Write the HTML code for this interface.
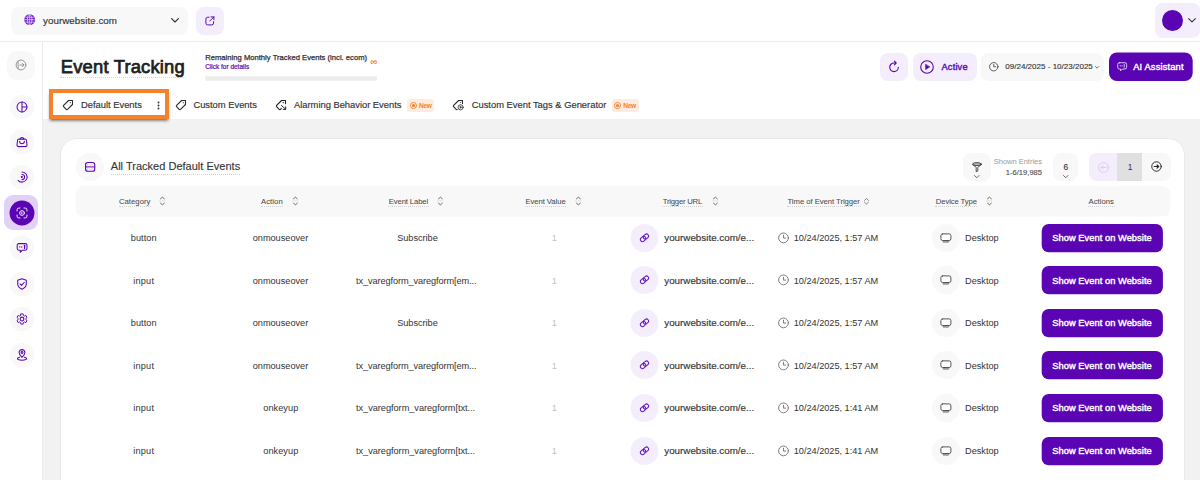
<!DOCTYPE html>
<html lang="en">
<head>
<meta charset="utf-8">
<title>Event Tracking</title>
<style>
*{box-sizing:border-box;margin:0;padding:0}
html,body{width:1200px;height:480px;overflow:hidden;background:#fff}
body{font-family:"Liberation Sans",sans-serif;color:#333;position:relative}
.a{position:absolute}
.t{position:absolute;white-space:nowrap}
svg{position:absolute;overflow:visible;fill:none;stroke-linecap:round;stroke-linejoin:round}
.dot{position:absolute;height:0;border-top:1px dotted #d2d2d2}
</style>
</head>
<body>

<div class="a" style="left:0;top:41px;width:1200px;height:1px;background:#ececec"></div>
<div class="a" style="left:11px;top:6.5px;width:177px;height:28.5px;background:#f8f8f8;border-radius:8px"></div>
<svg style="left:23.800px;top:14.300px" width="11.400" height="11.400" viewBox="0 0 12 12"><circle cx="6" cy="6" r="5.700" fill="#661cc0"/><g stroke="#eadcfa" stroke-width="0.750"><ellipse cx="6" cy="6" rx="2.4" ry="5.3"/><path d="M0.6 6h10.8M6 0.6v10.8M1.3 3.4h9.4M1.3 8.6h9.4"/></g></svg>
<div class="t" style="left:43.00px;top:16.00px;font-size:9.8px;line-height:9.8px;color:#333;letter-spacing:0.034px;-webkit-text-stroke:0.15px #333;">yourwebsite.com</div>
<svg style="left:171px;top:17.700px" width="8" height="5" viewBox="0 0 8 5"><path d="M0.6 0.6L4 4l3.4-3.400" stroke="#333" stroke-width="1.150"/></svg>
<div class="a" style="left:195.5px;top:6.5px;width:28px;height:28.5px;background:#f4edfc;border-radius:8px"></div>
<svg style="left:204.700px;top:15.700px" width="9.800" height="9.800" viewBox="0 0 11 11"><path d="M4.6 1.4H3a2 2 0 0 0-2 2V8a2 2 0 0 0 2 2h4.6a2 2 0 0 0 2-2V6.4M6.8 1h3.2v3.2M10 1L5.4 5.6" stroke="#5a06ad" stroke-width="1.1"/></svg>
<div class="a" style="left:1154.7px;top:2.9px;width:45.8px;height:35.1px;background:#f4edfc;border-radius:8px"></div>
<div class="a" style="left:1161.7px;top:9.9px;width:21.4px;height:21.4px;background:#5b04b4;border-radius:50%"></div>
<svg style="left:1188px;top:18.200px" width="8" height="4.500" viewBox="0 0 8 4.500"><path d="M0.6 0.6L4 3.900l3.400-3.300" stroke="#333" stroke-width="1.050"/></svg>
<div class="a" style="left:42px;top:42px;width:1px;height:438px;background:#ececec"></div>
<div class="a" style="left:7.3px;top:51px;width:28px;height:28.5px;background:#f8f8f8;border-radius:10px"></div>
<svg style="left:15.200px;top:58.800px" width="12" height="12" viewBox="0 0 12 12" stroke="#8c8c8c" stroke-width="0.900"><circle cx="6" cy="6" r="4.900"/><path d="M3.100 2.100v7.800M5 6h3.800M7.400 4.400L9 6 7.400 7.600"/></svg>
<svg style="left:8.50px;top:93.50px" width="26" height="26" viewBox="0 0 26 26"><circle cx="13" cy="13" r="12.350" fill="#f8f8f8"/></svg>
<svg style="left:8.50px;top:128.95px" width="26" height="26" viewBox="0 0 26 26"><circle cx="13" cy="13" r="12.350" fill="#f8f8f8"/></svg>
<svg style="left:8.50px;top:164.40px" width="26" height="26" viewBox="0 0 26 26"><circle cx="13" cy="13" r="12.350" fill="#f8f8f8"/></svg>
<div class="a" style="left:4px;top:195.2px;width:34px;height:34.8px;background:#e2d1f6;border-radius:9px"></div>
<svg style="left:8.50px;top:199.85px" width="26" height="26" viewBox="0 0 26 26"><circle cx="13" cy="13" r="12.450" fill="#5b04b4"/></svg>
<svg style="left:8.50px;top:235.30px" width="26" height="26" viewBox="0 0 26 26"><circle cx="13" cy="13" r="12.350" fill="#f8f8f8"/></svg>
<svg style="left:8.50px;top:270.75px" width="26" height="26" viewBox="0 0 26 26"><circle cx="13" cy="13" r="12.350" fill="#f8f8f8"/></svg>
<svg style="left:8.50px;top:306.20px" width="26" height="26" viewBox="0 0 26 26"><circle cx="13" cy="13" r="12.350" fill="#f8f8f8"/></svg>
<svg style="left:8.50px;top:341.65px" width="26" height="26" viewBox="0 0 26 26"><circle cx="13" cy="13" r="12.350" fill="#f8f8f8"/></svg>
<svg style="left:14.5px;top:99.50px" width="14" height="14" viewBox="0 0 14 14" stroke="#5a06ad" stroke-width="1.05"><circle cx="7" cy="7" r="4.950"/><path d="M7 2v10M7 7h5"/></svg>
<svg style="left:14.5px;top:134.95px" width="14" height="14" viewBox="0 0 14 14" stroke="#5a06ad" stroke-width="1.05"><path d="M3.900 4.100h6.200a1.300 1.300 0 0 1 1.300 1.100l.6 4.600a1.600 1.600 0 0 1-1.600 1.800H3.600a1.600 1.600 0 0 1-1.600-1.800l.6-4.600a1.300 1.300 0 0 1 1.300-1.100z"/><path d="M5.300 4.100a1.700 1.700 0 0 1 3.400 0M4.600 6.300a2.400 2.400 0 0 0 4.800 0"/></svg>
<svg style="left:14.5px;top:170.40px" width="14" height="14" viewBox="0 0 14 14" stroke="#5a06ad" stroke-width="1.05"><path d="M7 1.900A5.100 5.100 0 1 1 3.100 10.300M7 4.400A2.600 2.600 0 0 1 7 9.600"/><circle cx="6.800" cy="7" r="0.550" fill="#5a06ad"/></svg>
<svg style="left:14.5px;top:205.85px" width="14" height="14" viewBox="0 0 14 14" stroke="#efe4fb" stroke-width="1"><path d="M2.050 5V3.800a1.750 1.750 0 0 1 1.750-1.750H5M9 2.050h1.200a1.750 1.750 0 0 1 1.750 1.750V5M11.950 9v1.200a1.750 1.750 0 0 1-1.750 1.750H9M5 11.950H3.800a1.750 1.750 0 0 1-1.750-1.750V9"/><circle cx="7" cy="7" r="2.400"/><path d="M7.300 6.100a0.950 0.950 0 1 0 0 1.800" stroke-width="0.800"/></svg>
<svg style="left:14.5px;top:241.30px" width="14" height="14" viewBox="0 0 14 14" stroke="#5a06ad" stroke-width="1.05"><path d="M3.800 2.600h6.600a1.600 1.600 0 0 1 1.600 1.600v3.400a1.600 1.600 0 0 1-1.600 1.600H7.200L5.300 11.300V9.200H3.800a1.600 1.600 0 0 1-1.600-1.600V4.200a1.600 1.600 0 0 1 1.600-1.600z"/><path d="M4.700 5.900h0.100M6.700 5.900h0.100" stroke-width="1.300"/><path d="M9.600 4.300v3.200" stroke-width="1.300"/></svg>
<svg style="left:14.5px;top:276.75px" width="14" height="14" viewBox="0 0 14 14" stroke="#5a06ad" stroke-width="1.05"><path d="M7 1.700l4.300 1.500v3.500c0 2.600-1.800 4.400-4.300 5.500C4.500 11.100 2.700 9.300 2.700 6.700V3.200z"/><path d="M5 6.900l1.500 1.500 2.700-2.900"/></svg>
<svg style="left:14.5px;top:312.20px" width="14" height="14" viewBox="0 0 14 14" stroke="#5a06ad" stroke-width="1.05"><circle cx="7" cy="7" r="1.900"/><path d="M5.900 1.900h2.200l.3 1.500 1.100.6 1.400-.5 1.100 1.900-1.100 1v1.200l1.100 1-1.100 1.900-1.400-.5-1.100.6-.3 1.500H5.900l-.3-1.500-1.100-.6-1.400.5L2 8.600l1.100-1V6.400L2 5.400l1.100-1.900 1.400.5 1.100-.6z" stroke-width="0.95"/></svg>
<svg style="left:14.5px;top:347.65px" width="14" height="14" viewBox="0 0 14 14" stroke="#5a06ad" stroke-width="1.05"><path d="M7 9.300c1.900-1.900 2.900-3.400 2.900-4.800a2.900 2.900 0 0 0-5.800 0c0 1.400 1 2.900 2.900 4.800z"/><circle cx="7" cy="4.500" r="0.950"/><path d="M4.600 9.200c-1.300.3-2.200.8-2.200 1.400 0 .9 2 1.600 4.600 1.600s4.600-.7 4.600-1.600c0-.6-.9-1.100-2.200-1.400"/></svg>
<div class="t" style="left:60.80px;top:58.00px;font-size:18.4px;line-height:18.4px;color:#1f1f1f;letter-spacing:0.177px;-webkit-text-stroke:0.75px #1f1f1f;">Event Tracking</div>
<div class="dot" style="left:60px;top:76.5px;width:126px;border-color:#d6d6d6"></div>
<div class="t" style="left:205.25px;top:54.00px;font-size:7.6px;line-height:7.6px;color:#2e2e2e;letter-spacing:0.023px;-webkit-text-stroke:0.25px #2e2e2e;">Remaining Monthly Tracked Events (incl. ecom)</div>
<div class="t" style="left:205.25px;top:64.00px;font-size:6.48px;line-height:6.48px;color:#5a06ad;letter-spacing:0.001px;-webkit-text-stroke:0.2px #5a06ad;">Click for details</div>
<div class="t" style="left:370.36px;top:57.00px;font-size:9.5px;line-height:9.5px;color:#f5822a;letter-spacing:0.000px;font-weight:700;">∞</div>
<svg style="left:205px;top:76px" width="172" height="5" viewBox="0 0 172 5"><rect x="0.250" y="0.250" width="171.700" height="4.450" rx="1" fill="#ececec"/></svg>
<div class="a" style="left:880.2px;top:53px;width:28.3px;height:28px;background:#f4edfc;border-radius:8px"></div>
<svg style="left:888.2px;top:60.2px" width="12" height="13" viewBox="0 0 12 13"><path d="M10.3 7.300a4.300 4.300 0 1 1-4.300-4.300h1.800M6.400 1.200l1.800 1.800-1.800 1.800" stroke="#5a06ad" stroke-width="1.100"/></svg>
<div class="a" style="left:913.2px;top:53px;width:63.5px;height:28px;background:#f4edfc;border-radius:8px"></div>
<svg style="left:920.2px;top:59.700px" width="14" height="14" viewBox="0 0 14 14"><circle cx="7" cy="7" r="6.300" stroke="#5a06ad" stroke-width="1.100"/><path d="M5.600 4.500v5l4-2.500z" fill="#5a06ad" stroke="#5a06ad" stroke-width="0.600"/></svg>
<div class="t" style="left:941.50px;top:63.00px;font-size:9.3px;line-height:9.3px;color:#5c0ab6;letter-spacing:0.155px;-webkit-text-stroke:0.4px #5c0ab6;">Active</div>
<div class="a" style="left:981.4px;top:53px;width:122.9px;height:28px;background:#f8f8f8;border-radius:8px"></div>
<svg style="left:989.300px;top:62.100px" width="9.500" height="9.500" viewBox="0 0 10 10"><circle cx="5" cy="5" r="4.400" stroke="#444" stroke-width="0.900"/><path d="M5 2.500V5h2" stroke="#444" stroke-width="0.900"/></svg>
<div class="t" style="left:1005.30px;top:63.00px;font-size:8px;line-height:8px;color:#333;letter-spacing:0.014px;-webkit-text-stroke:0.12px #333;">09/24/2025 - 10/23/2025</div>
<svg style="left:1094.900px;top:65.500px" width="4.200" height="2.700" viewBox="0 0 5 3"><path d="M0.400 0.400L2.500 2.500 4.600 0.400" stroke="#444" stroke-width="0.850"/></svg>
<svg style="left:1108px;top:52px" width="86" height="30" viewBox="0 0 86 30"><rect x="1" y="0.400" width="83.700" height="28.600" rx="8" fill="#5b04b4"/></svg>
<svg style="left:1116.800px;top:62px" width="10.350" height="9.900" viewBox="0 0 11.5 11" stroke="#e9dafa" stroke-width="1"><path d="M2.600 0.800h6.300a1.800 1.800 0 0 1 1.800 1.800v3.400a1.800 1.800 0 0 1-1.800 1.800H6L4 9.800v-2H2.600a1.800 1.800 0 0 1-1.800-1.800V2.600a1.800 1.800 0 0 1 1.800-1.800z"/><path d="M3.500 4.300h0.200M5.500 4.300h0.200" stroke-width="1.200"/><path d="M8 2.800v3"/></svg>
<div class="t" style="left:1133.20px;top:63.00px;font-size:9.3px;line-height:9.3px;color:#fff;letter-spacing:0.155px;-webkit-text-stroke:0.4px #fff;">AI Assistant</div>
<div class="a" style="left:43px;top:119.300px;width:1157px;height:361px;background:#f2f2f2"></div>
<div class="a" style="left:49px;top:89px;width:120px;height:30px;background:#fff;border:4px solid #f6832b;box-shadow:0 2.500px 3px -1px rgba(0,0,0,0.6)"></div>
<svg style="left:63.2px;top:100px" width="10" height="10" viewBox="0 0 10 10" stroke="#2a2a2a" stroke-width="1.100"><path d="M5.600 .500H9.500V4.500L4.500 9.300a.9 .9 0 0 1-1.300 0L.600 6.700a.9 .9 0 0 1 0-1.300Z"/><circle cx="7.300" cy="2.700" r="0.600" fill="#333" stroke="none"/></svg>
<div class="t" style="left:81.00px;top:100.00px;font-size:9.4px;line-height:9.4px;color:#333;letter-spacing:-0.010px;-webkit-text-stroke:0.16px #333;">Default Events</div>
<svg style="left:157px;top:101px" width="3" height="9" viewBox="0 0 3 9"><circle cx="1.500" cy="1.500" r="0.950" fill="#333"/><circle cx="1.500" cy="4.500" r="0.950" fill="#333"/><circle cx="1.500" cy="7.500" r="0.950" fill="#333"/></svg>
<svg style="left:175.8px;top:100px" width="10" height="10" viewBox="0 0 10 10" stroke="#2a2a2a" stroke-width="1.100"><path d="M5.600 .500H9.500V4.500L4.500 9.300a.9 .9 0 0 1-1.300 0L.600 6.700a.9 .9 0 0 1 0-1.300Z"/><circle cx="7.300" cy="2.700" r="0.600" fill="#333" stroke="none"/></svg>
<div class="t" style="left:193.40px;top:100.00px;font-size:9.4px;line-height:9.4px;color:#333;letter-spacing:-0.011px;-webkit-text-stroke:0.16px #333;">Custom Events</div>
<svg style="left:276.100px;top:100px" width="10" height="10" viewBox="0 0 10 10" stroke="#222" stroke-width="1.100"><path d="M9.500 3.800V.500H5.600L.600 5.400a.9 .9 0 0 0 0 1.300L3.200 9.300a.9 .9 0 0 0 1.300 0L5.300 8.500"/><circle cx="7.300" cy="2.700" r="0.650" fill="#222" stroke="none"/><path d="M5.500 5.500L9.300 8.900M9.700 6.800V9.400H7.200" stroke-width="1"/></svg>
<div class="t" style="left:294.00px;top:100.00px;font-size:9.4px;line-height:9.4px;color:#333;letter-spacing:-0.019px;-webkit-text-stroke:0.16px #333;">Alarming Behavior Events</div>
<div class="a" style="left:407.1px;top:99.300px;width:27.3px;height:12.300px;background:#fdebdf;border-radius:3.500px"></div>
<svg style="left:409.7px;top:101.7px" width="7" height="7" viewBox="0 0 7 7"><circle cx="3.500" cy="3.500" r="3.050" stroke="#f6832b" stroke-width="0.900"/><circle cx="3.500" cy="3.500" r="1.600" fill="#f6832b"/></svg>
<div class="t" style="left:419.00px;top:103.00px;font-size:6.6px;line-height:6.6px;color:#f6832b;letter-spacing:-0.385px;font-weight:700;">New</div>
<svg style="left:453.300px;top:100px" width="10.500" height="10.500" viewBox="0 0 10.500 10.500" stroke="#2a2a2a" stroke-width="1.100"><path d="M9.500 3.600V.500H5.600L.600 5.400a.9 .9 0 0 0 0 1.300L3.200 9.300a.9 .9 0 0 0 1 .200"/><circle cx="7.300" cy="2.500" r="0.550" fill="#333" stroke="none"/><circle cx="7.600" cy="7.300" r="2.600" stroke-width="0.800"/><path d="M6.900 6.100v2.400l2-1.200z" fill="#333" stroke-width="0.300"/></svg>
<div class="t" style="left:471.70px;top:100.00px;font-size:9.4px;line-height:9.4px;color:#333;letter-spacing:-0.005px;-webkit-text-stroke:0.16px #333;">Custom Event Tags &amp; Generator</div>
<div class="a" style="left:611.7px;top:99.300px;width:27.3px;height:12.300px;background:#fdebdf;border-radius:3.500px"></div>
<svg style="left:614.2px;top:101.7px" width="7" height="7" viewBox="0 0 7 7"><circle cx="3.500" cy="3.500" r="3.050" stroke="#f6832b" stroke-width="0.900"/><circle cx="3.500" cy="3.500" r="1.600" fill="#f6832b"/></svg>
<div class="t" style="left:623.30px;top:103.00px;font-size:6.6px;line-height:6.6px;color:#f6832b;letter-spacing:-0.385px;font-weight:700;">New</div>
<div class="a" style="left:60.3px;top:138px;width:1125px;height:360px;background:#fff;border:1px solid #e9e9e9;border-radius:17px"></div>
<div class="a" style="left:75.6px;top:153px;width:28px;height:28px;background:#f8f8f8;border-radius:50%"></div>
<svg style="left:84.900px;top:162px" width="10.300" height="9.800" viewBox="0 0 10.300 9.800" stroke="#5a06ad" stroke-width="1.100"><rect x="0.550" y="0.550" width="9.200" height="8.700" rx="2.300" fill="#fbf8ff"/><path d="M0.600 4.900h9.100" stroke-width="1"/><path d="M4.200 2.750h3.400M4.200 7.050h3.400" stroke="#d9c4f4" stroke-width="0.700"/><path d="M2.500 2.750h0.100M2.500 7.050h0.100" stroke="#b08ae4" stroke-width="0.900"/></svg>
<div class="t" style="left:110.80px;top:161.00px;font-size:11px;line-height:11px;color:#333;letter-spacing:0.015px;-webkit-text-stroke:0.12px #333;">All Tracked Default Events</div>
<div class="dot" style="left:111px;top:174.200px;width:129px"></div>
<div class="a" style="left:962.5px;top:153px;width:28.1px;height:28.2px;background:#f8f8f8;border-radius:8px"></div>
<svg style="left:971.500px;top:161.600px" width="10" height="10" viewBox="0 0 10 10" stroke="#333" stroke-width="0.850"><ellipse cx="5" cy="2.100" rx="4.400" ry="1.500" fill="#b8b8b8"/><path d="M0.700 2.600C1.200 4 4.200 4.400 4.200 5.600V9.700L5.800 8.900V5.600C5.800 4.400 8.800 4 9.300 2.600" stroke-width="0.850"/></svg>
<svg style="left:973.800px;top:175px" width="5.500" height="3.500" viewBox="0 0 5.500 3.500"><path d="M0.500 0.500l2.250 2.250L5 0.500" stroke="#444" stroke-width="0.800"/></svg>
<div class="t" style="left:993.75px;top:158.00px;font-size:7.5px;line-height:7.5px;color:#9a9a9a;letter-spacing:-0.009px;">Shown Entries</div>
<div class="t" style="left:1005.80px;top:169.00px;font-size:7.5px;line-height:7.5px;color:#555;letter-spacing:0.038px;-webkit-text-stroke:0.15px #555;">1-6/19,985</div>
<div class="a" style="left:1053px;top:153px;width:24.700px;height:28.2px;background:#f8f8f8;border-radius:8px"></div>
<div class="t" style="left:1063.51px;top:163.00px;font-size:8.4px;line-height:8.4px;color:#333;letter-spacing:0.000px;-webkit-text-stroke:0.1px #333;">6</div>
<svg style="left:1062.800px;top:175px" width="5.500" height="3.500" viewBox="0 0 5.500 3.500"><path d="M0.500 0.500l2.250 2.250L5 0.500" stroke="#444" stroke-width="0.800"/></svg>
<div class="a" style="left:1089px;top:153px;width:82px;height:28.2px;background:#f8f8f8;border-radius:8px;overflow:hidden"><div class="a" style="left:0;top:0;width:28.300px;height:29px;background:#f4edfc"></div><div class="a" style="left:28.300px;top:0;width:24.700px;height:29px;background:#e0e0e0"></div></div>
<svg style="left:1097.500px;top:161.500px" width="11" height="11" viewBox="0 0 11 11" stroke="#dcc6f4" stroke-width="0.900"><circle cx="5.500" cy="5.500" r="4.900"/><path d="M8 5.500H3.200M5 3.600L3.100 5.500 5 7.400"/></svg>
<div class="t" style="left:1127.64px;top:163.00px;font-size:8.5px;line-height:8.5px;color:#333;letter-spacing:0.000px;">1</div>
<svg style="left:1151.350px;top:161.350px" width="11" height="11" viewBox="0 0 11 11" stroke="#222" stroke-width="0.950"><circle cx="5.500" cy="5.500" r="4.750"/><path d="M3.200 5.500h4.400M6 3.800l1.700 1.700L6 7.200" stroke-width="1.100"/></svg>
<svg style="left:75px;top:186px" width="1096" height="31" viewBox="0 0 1096 31"><rect x="0.400" y="0.300" width="1095.100" height="30.200" rx="8" fill="#f8f8f8"/></svg>
<div class="t" style="left:119.00px;top:198.00px;font-size:7.7px;line-height:7.7px;color:#4a4a4a;letter-spacing:0.023px;-webkit-text-stroke:0.05px #4a4a4a;">Category</div>
<div class="dot" style="left:118.5px;top:206px;width:32.4px"></div>
<svg style="left:159.3px;top:196.300px" width="7" height="10.500" viewBox="0 0 7 10.500" stroke="#4a4a4a" stroke-width="0.900"><path d="M1.500 2.800L3.400 1.200 5.300 2.800M1.500 7.200L3.400 8.800 5.300 7.200" stroke="#505050" stroke-width="0.850"/><path d="M0.300 4.900h6.400" stroke="#d4d4d4" stroke-width="1" stroke-dasharray="1.300 0.900" stroke-linecap="butt"/></svg>
<div class="t" style="left:261.00px;top:198.00px;font-size:7.7px;line-height:7.7px;color:#4a4a4a;letter-spacing:0.060px;-webkit-text-stroke:0.05px #4a4a4a;">Action</div>
<div class="dot" style="left:260.5px;top:206px;width:22.7px"></div>
<svg style="left:291.8px;top:196.300px" width="7" height="10.500" viewBox="0 0 7 10.500" stroke="#4a4a4a" stroke-width="0.900"><path d="M1.500 2.800L3.400 1.200 5.300 2.800M1.500 7.200L3.400 8.800 5.300 7.200" stroke="#505050" stroke-width="0.850"/><path d="M0.300 4.900h6.400" stroke="#d4d4d4" stroke-width="1" stroke-dasharray="1.300 0.900" stroke-linecap="butt"/></svg>
<div class="t" style="left:388.75px;top:198.00px;font-size:7.7px;line-height:7.7px;color:#4a4a4a;letter-spacing:-0.117px;-webkit-text-stroke:0.05px #4a4a4a;">Event Label</div>
<div class="dot" style="left:388.2px;top:206px;width:40.5px"></div>
<svg style="left:437.2px;top:196.300px" width="7" height="10.500" viewBox="0 0 7 10.500" stroke="#4a4a4a" stroke-width="0.900"><path d="M1.500 2.800L3.400 1.200 5.300 2.800M1.500 7.200L3.400 8.800 5.300 7.200" stroke="#505050" stroke-width="0.850"/><path d="M0.300 4.900h6.400" stroke="#d4d4d4" stroke-width="1" stroke-dasharray="1.300 0.900" stroke-linecap="butt"/></svg>
<div class="t" style="left:525.50px;top:198.00px;font-size:7.7px;line-height:7.7px;color:#4a4a4a;letter-spacing:-0.070px;-webkit-text-stroke:0.05px #4a4a4a;">Event Value</div>
<div class="dot" style="left:525.0px;top:206px;width:41.2px"></div>
<svg style="left:574.6px;top:196.300px" width="7" height="10.500" viewBox="0 0 7 10.500" stroke="#4a4a4a" stroke-width="0.900"><path d="M1.500 2.800L3.400 1.200 5.300 2.800M1.500 7.200L3.400 8.800 5.300 7.200" stroke="#505050" stroke-width="0.850"/><path d="M0.300 4.900h6.400" stroke="#d4d4d4" stroke-width="1" stroke-dasharray="1.300 0.900" stroke-linecap="butt"/></svg>
<div class="t" style="left:662.70px;top:198.00px;font-size:7.7px;line-height:7.7px;color:#4a4a4a;letter-spacing:-0.204px;-webkit-text-stroke:0.05px #4a4a4a;">Trigger URL</div>
<div class="dot" style="left:662.2px;top:206px;width:40.6px"></div>
<svg style="left:711.6px;top:196.300px" width="7" height="10.500" viewBox="0 0 7 10.500" stroke="#4a4a4a" stroke-width="0.900"><path d="M1.500 2.800L3.400 1.200 5.300 2.800M1.500 7.200L3.400 8.800 5.300 7.200" stroke="#505050" stroke-width="0.850"/><path d="M0.300 4.900h6.400" stroke="#d4d4d4" stroke-width="1" stroke-dasharray="1.300 0.900" stroke-linecap="butt"/></svg>
<div class="t" style="left:787.50px;top:198.00px;font-size:7.7px;line-height:7.7px;color:#4a4a4a;letter-spacing:-0.041px;-webkit-text-stroke:0.05px #4a4a4a;">Time of Event Trigger</div>
<div class="dot" style="left:787.0px;top:206px;width:73.5px"></div>
<svg style="left:863.8px;top:198px" width="5" height="6.500" viewBox="0 0 5 6.500" stroke="#555" stroke-width="0.700"><path d="M0.500 2.400L2.500 0.500l2 1.900M0.500 4.100l2 1.900 2-1.900"/></svg>
<div class="t" style="left:935.75px;top:198.00px;font-size:7.7px;line-height:7.7px;color:#4a4a4a;letter-spacing:-0.098px;-webkit-text-stroke:0.05px #4a4a4a;">Device Type</div>
<div class="dot" style="left:935.2px;top:206px;width:42.2px"></div>
<svg style="left:986.2px;top:196.300px" width="7" height="10.500" viewBox="0 0 7 10.500" stroke="#4a4a4a" stroke-width="0.900"><path d="M1.500 2.800L3.400 1.200 5.300 2.800M1.500 7.200L3.400 8.800 5.300 7.200" stroke="#505050" stroke-width="0.850"/><path d="M0.300 4.900h6.400" stroke="#d4d4d4" stroke-width="1" stroke-dasharray="1.300 0.900" stroke-linecap="butt"/></svg>
<div class="t" style="left:1088.50px;top:198.00px;font-size:7.7px;line-height:7.7px;color:#4a4a4a;letter-spacing:0.042px;-webkit-text-stroke:0.05px #4a4a4a;">Actions</div>
<div class="dot" style="left:1088.0px;top:206px;width:26.5px"></div>
<svg style="left:600px;top:222.75px" width="600" height="30" viewBox="600 0 600 30"><circle cx="644.500" cy="15" r="14" fill="#f4edfc"/><g transform="translate(644.500 14.800) rotate(-40)" stroke="#6818c0" stroke-width="1"><rect x="-4.700" y="-2.100" width="5.700" height="4.200" rx="2.100"/><rect x="-1" y="-2.100" width="5.700" height="4.200" rx="2.100"/></g><g transform="translate(778 9.400)" stroke="#707070" stroke-width="0.900"><circle cx="5.500" cy="5.500" r="4.900"/><path d="M5.500 2.800v2.900h2.200"/></g><circle cx="946" cy="15" r="14" fill="#f8f8f8"/><g transform="translate(940.400 10.200)" stroke="#555" stroke-width="1"><rect x="0.500" y="0.700" width="10" height="6.600" rx="1.700" fill="#fff"/><path d="M1.900 7.800h7.200l-.9 1.700H2.800z" fill="#999" stroke="none"/></g><rect x="1041.700" y="0.900" width="121.200" height="28.300" rx="7" fill="#5b04b4"/></svg>
<div class="t" style="left:130.70px;top:234.00px;font-size:9.2px;line-height:9.2px;color:#333;letter-spacing:0.085px;">button</div>
<div class="t" style="left:252.70px;top:234.00px;font-size:9.2px;line-height:9.2px;color:#333;letter-spacing:-0.014px;">onmouseover</div>
<div class="t" style="left:397.20px;top:234.00px;font-size:9.2px;line-height:9.2px;color:#333;letter-spacing:-0.038px;">Subscribe</div>
<div class="t" style="left:551.64px;top:233.00px;font-size:9.4px;line-height:9.4px;color:#c2c2c2;letter-spacing:0.000px;">1</div>
<div class="t" style="left:664.25px;top:233.00px;font-size:9.8px;line-height:9.8px;color:#333;letter-spacing:0.007px;-webkit-text-stroke:0.15px #333;">yourwebsite.com/e...</div>
<div class="t" style="left:793.75px;top:234.00px;font-size:9.2px;line-height:9.2px;color:#333;letter-spacing:-0.022px;">10/24/2025, 1:57 AM</div>
<div class="t" style="left:965.00px;top:234.00px;font-size:9.2px;line-height:9.2px;color:#333;letter-spacing:0.000px;">Desktop</div>
<div class="t" style="left:1052.30px;top:234.00px;font-size:9.3px;line-height:9.3px;color:#fff;letter-spacing:0.042px;-webkit-text-stroke:0.4px #fff;">Show Event on Website</div>
<svg style="left:600px;top:265.30px" width="600" height="30" viewBox="600 0 600 30"><circle cx="644.500" cy="15" r="14" fill="#f4edfc"/><g transform="translate(644.500 14.800) rotate(-40)" stroke="#6818c0" stroke-width="1"><rect x="-4.700" y="-2.100" width="5.700" height="4.200" rx="2.100"/><rect x="-1" y="-2.100" width="5.700" height="4.200" rx="2.100"/></g><g transform="translate(778 9.400)" stroke="#707070" stroke-width="0.900"><circle cx="5.500" cy="5.500" r="4.900"/><path d="M5.500 2.800v2.900h2.200"/></g><circle cx="946" cy="15" r="14" fill="#f8f8f8"/><g transform="translate(940.400 10.200)" stroke="#555" stroke-width="1"><rect x="0.500" y="0.700" width="10" height="6.600" rx="1.700" fill="#fff"/><path d="M1.900 7.800h7.200l-.9 1.700H2.800z" fill="#999" stroke="none"/></g><rect x="1041.700" y="0.900" width="121.200" height="28.300" rx="7" fill="#5b04b4"/></svg>
<div class="t" style="left:133.30px;top:277.00px;font-size:9.2px;line-height:9.2px;color:#333;letter-spacing:0.188px;">input</div>
<div class="t" style="left:252.70px;top:277.00px;font-size:9.2px;line-height:9.2px;color:#333;letter-spacing:-0.014px;">onmouseover</div>
<div class="t" style="left:356.00px;top:277.00px;font-size:9.2px;line-height:9.2px;color:#333;letter-spacing:-0.093px;">tx_varegform_varegform[em...</div>
<div class="t" style="left:551.64px;top:276.00px;font-size:9.4px;line-height:9.4px;color:#c2c2c2;letter-spacing:0.000px;">1</div>
<div class="t" style="left:664.25px;top:276.00px;font-size:9.8px;line-height:9.8px;color:#333;letter-spacing:0.007px;-webkit-text-stroke:0.15px #333;">yourwebsite.com/e...</div>
<div class="t" style="left:793.75px;top:277.00px;font-size:9.2px;line-height:9.2px;color:#333;letter-spacing:-0.022px;">10/24/2025, 1:57 AM</div>
<div class="t" style="left:965.00px;top:277.00px;font-size:9.2px;line-height:9.2px;color:#333;letter-spacing:0.000px;">Desktop</div>
<div class="t" style="left:1052.30px;top:277.00px;font-size:9.3px;line-height:9.3px;color:#fff;letter-spacing:0.042px;-webkit-text-stroke:0.4px #fff;">Show Event on Website</div>
<svg style="left:600px;top:307.85px" width="600" height="30" viewBox="600 0 600 30"><circle cx="644.500" cy="15" r="14" fill="#f4edfc"/><g transform="translate(644.500 14.800) rotate(-40)" stroke="#6818c0" stroke-width="1"><rect x="-4.700" y="-2.100" width="5.700" height="4.200" rx="2.100"/><rect x="-1" y="-2.100" width="5.700" height="4.200" rx="2.100"/></g><g transform="translate(778 9.400)" stroke="#707070" stroke-width="0.900"><circle cx="5.500" cy="5.500" r="4.900"/><path d="M5.500 2.800v2.900h2.200"/></g><circle cx="946" cy="15" r="14" fill="#f8f8f8"/><g transform="translate(940.400 10.200)" stroke="#555" stroke-width="1"><rect x="0.500" y="0.700" width="10" height="6.600" rx="1.700" fill="#fff"/><path d="M1.900 7.800h7.200l-.9 1.700H2.800z" fill="#999" stroke="none"/></g><rect x="1041.700" y="0.900" width="121.200" height="28.300" rx="7" fill="#5b04b4"/></svg>
<div class="t" style="left:130.70px;top:319.00px;font-size:9.2px;line-height:9.2px;color:#333;letter-spacing:0.085px;">button</div>
<div class="t" style="left:252.70px;top:319.00px;font-size:9.2px;line-height:9.2px;color:#333;letter-spacing:-0.014px;">onmouseover</div>
<div class="t" style="left:397.20px;top:319.00px;font-size:9.2px;line-height:9.2px;color:#333;letter-spacing:-0.038px;">Subscribe</div>
<div class="t" style="left:551.64px;top:318.00px;font-size:9.4px;line-height:9.4px;color:#c2c2c2;letter-spacing:0.000px;">1</div>
<div class="t" style="left:664.25px;top:318.00px;font-size:9.8px;line-height:9.8px;color:#333;letter-spacing:0.007px;-webkit-text-stroke:0.15px #333;">yourwebsite.com/e...</div>
<div class="t" style="left:793.75px;top:319.00px;font-size:9.2px;line-height:9.2px;color:#333;letter-spacing:-0.022px;">10/24/2025, 1:57 AM</div>
<div class="t" style="left:965.00px;top:319.00px;font-size:9.2px;line-height:9.2px;color:#333;letter-spacing:0.000px;">Desktop</div>
<div class="t" style="left:1052.30px;top:319.00px;font-size:9.3px;line-height:9.3px;color:#fff;letter-spacing:0.042px;-webkit-text-stroke:0.4px #fff;">Show Event on Website</div>
<svg style="left:600px;top:350.40px" width="600" height="30" viewBox="600 0 600 30"><circle cx="644.500" cy="15" r="14" fill="#f4edfc"/><g transform="translate(644.500 14.800) rotate(-40)" stroke="#6818c0" stroke-width="1"><rect x="-4.700" y="-2.100" width="5.700" height="4.200" rx="2.100"/><rect x="-1" y="-2.100" width="5.700" height="4.200" rx="2.100"/></g><g transform="translate(778 9.400)" stroke="#707070" stroke-width="0.900"><circle cx="5.500" cy="5.500" r="4.900"/><path d="M5.500 2.800v2.900h2.200"/></g><circle cx="946" cy="15" r="14" fill="#f8f8f8"/><g transform="translate(940.400 10.200)" stroke="#555" stroke-width="1"><rect x="0.500" y="0.700" width="10" height="6.600" rx="1.700" fill="#fff"/><path d="M1.900 7.800h7.200l-.9 1.700H2.800z" fill="#999" stroke="none"/></g><rect x="1041.700" y="0.900" width="121.200" height="28.300" rx="7" fill="#5b04b4"/></svg>
<div class="t" style="left:133.30px;top:362.00px;font-size:9.2px;line-height:9.2px;color:#333;letter-spacing:0.188px;">input</div>
<div class="t" style="left:252.70px;top:362.00px;font-size:9.2px;line-height:9.2px;color:#333;letter-spacing:-0.014px;">onmouseover</div>
<div class="t" style="left:356.00px;top:362.00px;font-size:9.2px;line-height:9.2px;color:#333;letter-spacing:-0.093px;">tx_varegform_varegform[em...</div>
<div class="t" style="left:551.64px;top:361.00px;font-size:9.4px;line-height:9.4px;color:#c2c2c2;letter-spacing:0.000px;">1</div>
<div class="t" style="left:664.25px;top:361.00px;font-size:9.8px;line-height:9.8px;color:#333;letter-spacing:0.007px;-webkit-text-stroke:0.15px #333;">yourwebsite.com/e...</div>
<div class="t" style="left:793.75px;top:362.00px;font-size:9.2px;line-height:9.2px;color:#333;letter-spacing:-0.022px;">10/24/2025, 1:57 AM</div>
<div class="t" style="left:965.00px;top:362.00px;font-size:9.2px;line-height:9.2px;color:#333;letter-spacing:0.000px;">Desktop</div>
<div class="t" style="left:1052.30px;top:362.00px;font-size:9.3px;line-height:9.3px;color:#fff;letter-spacing:0.042px;-webkit-text-stroke:0.4px #fff;">Show Event on Website</div>
<svg style="left:600px;top:392.95px" width="600" height="30" viewBox="600 0 600 30"><circle cx="644.500" cy="15" r="14" fill="#f4edfc"/><g transform="translate(644.500 14.800) rotate(-40)" stroke="#6818c0" stroke-width="1"><rect x="-4.700" y="-2.100" width="5.700" height="4.200" rx="2.100"/><rect x="-1" y="-2.100" width="5.700" height="4.200" rx="2.100"/></g><g transform="translate(778 9.400)" stroke="#707070" stroke-width="0.900"><circle cx="5.500" cy="5.500" r="4.900"/><path d="M5.500 2.800v2.900h2.200"/></g><circle cx="946" cy="15" r="14" fill="#f8f8f8"/><g transform="translate(940.400 10.200)" stroke="#555" stroke-width="1"><rect x="0.500" y="0.700" width="10" height="6.600" rx="1.700" fill="#fff"/><path d="M1.900 7.800h7.200l-.9 1.700H2.800z" fill="#999" stroke="none"/></g><rect x="1041.700" y="0.900" width="121.200" height="28.300" rx="7" fill="#5b04b4"/></svg>
<div class="t" style="left:133.30px;top:404.00px;font-size:9.2px;line-height:9.2px;color:#333;letter-spacing:0.188px;">input</div>
<div class="t" style="left:263.30px;top:404.00px;font-size:9.2px;line-height:9.2px;color:#333;letter-spacing:0.037px;">onkeyup</div>
<div class="t" style="left:356.00px;top:404.00px;font-size:9.2px;line-height:9.2px;color:#333;letter-spacing:-0.030px;">tx_varegform_varegform[txt...</div>
<div class="t" style="left:551.64px;top:403.00px;font-size:9.4px;line-height:9.4px;color:#c2c2c2;letter-spacing:0.000px;">1</div>
<div class="t" style="left:664.25px;top:403.00px;font-size:9.8px;line-height:9.8px;color:#333;letter-spacing:0.007px;-webkit-text-stroke:0.15px #333;">yourwebsite.com/e...</div>
<div class="t" style="left:793.75px;top:404.00px;font-size:9.2px;line-height:9.2px;color:#333;letter-spacing:-0.022px;">10/24/2025, 1:41 AM</div>
<div class="t" style="left:965.00px;top:404.00px;font-size:9.2px;line-height:9.2px;color:#333;letter-spacing:0.000px;">Desktop</div>
<div class="t" style="left:1052.30px;top:404.00px;font-size:9.3px;line-height:9.3px;color:#fff;letter-spacing:0.042px;-webkit-text-stroke:0.4px #fff;">Show Event on Website</div>
<svg style="left:600px;top:435.50px" width="600" height="30" viewBox="600 0 600 30"><circle cx="644.500" cy="15" r="14" fill="#f4edfc"/><g transform="translate(644.500 14.800) rotate(-40)" stroke="#6818c0" stroke-width="1"><rect x="-4.700" y="-2.100" width="5.700" height="4.200" rx="2.100"/><rect x="-1" y="-2.100" width="5.700" height="4.200" rx="2.100"/></g><g transform="translate(778 9.400)" stroke="#707070" stroke-width="0.900"><circle cx="5.500" cy="5.500" r="4.900"/><path d="M5.500 2.800v2.900h2.200"/></g><circle cx="946" cy="15" r="14" fill="#f8f8f8"/><g transform="translate(940.400 10.200)" stroke="#555" stroke-width="1"><rect x="0.500" y="0.700" width="10" height="6.600" rx="1.700" fill="#fff"/><path d="M1.900 7.800h7.200l-.9 1.700H2.800z" fill="#999" stroke="none"/></g><rect x="1041.700" y="0.900" width="121.200" height="28.300" rx="7" fill="#5b04b4"/></svg>
<div class="t" style="left:133.30px;top:447.00px;font-size:9.2px;line-height:9.2px;color:#333;letter-spacing:0.188px;">input</div>
<div class="t" style="left:263.30px;top:447.00px;font-size:9.2px;line-height:9.2px;color:#333;letter-spacing:0.037px;">onkeyup</div>
<div class="t" style="left:356.00px;top:447.00px;font-size:9.2px;line-height:9.2px;color:#333;letter-spacing:-0.030px;">tx_varegform_varegform[txt...</div>
<div class="t" style="left:551.64px;top:446.00px;font-size:9.4px;line-height:9.4px;color:#c2c2c2;letter-spacing:0.000px;">1</div>
<div class="t" style="left:664.25px;top:446.00px;font-size:9.8px;line-height:9.8px;color:#333;letter-spacing:0.007px;-webkit-text-stroke:0.15px #333;">yourwebsite.com/e...</div>
<div class="t" style="left:793.75px;top:447.00px;font-size:9.2px;line-height:9.2px;color:#333;letter-spacing:-0.022px;">10/24/2025, 1:41 AM</div>
<div class="t" style="left:965.00px;top:447.00px;font-size:9.2px;line-height:9.2px;color:#333;letter-spacing:0.000px;">Desktop</div>
<div class="t" style="left:1052.30px;top:447.00px;font-size:9.3px;line-height:9.3px;color:#fff;letter-spacing:0.042px;-webkit-text-stroke:0.4px #fff;">Show Event on Website</div>
</body>
</html>
